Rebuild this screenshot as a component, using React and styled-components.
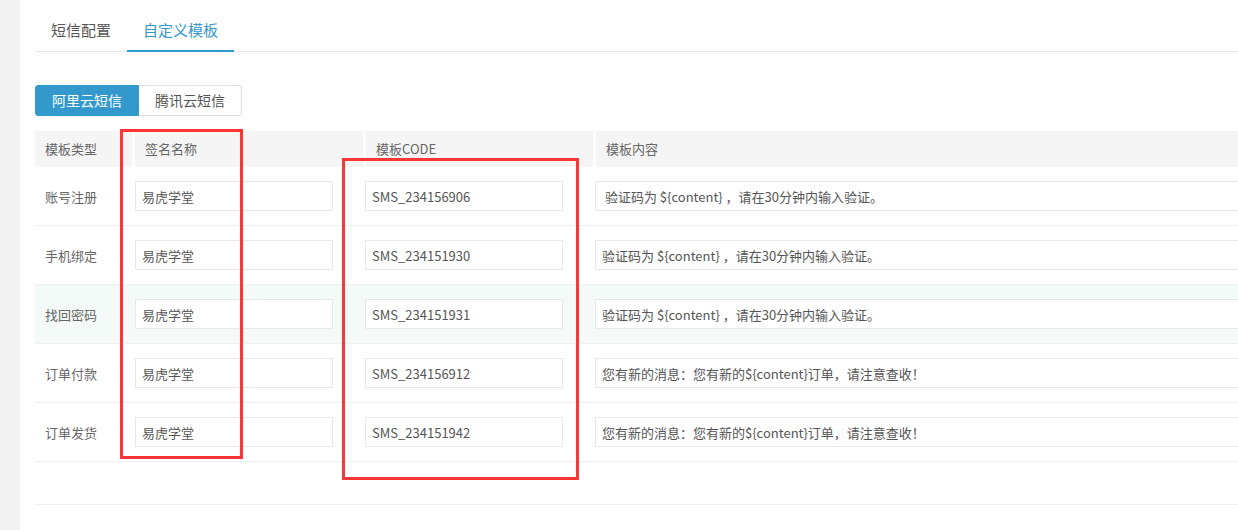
import React, { useState } from 'react';
import styled, { createGlobalStyle } from 'styled-components';

const GlobalStyle = createGlobalStyle`
    html, body {
        margin: 0;
        padding: 0;
        background: #fff;
        overflow: hidden;
    }
    body {
        font-family: "Noto Sans CJK SC", "Open Sans", sans-serif;
        color: #555;
    }
    * { box-sizing: border-box; }
`;

const Page = styled.div`
    position: relative;
    display: flex;
    width: 1238px;
    height: 530px;
    overflow: hidden;
`;

const SideStrip = styled.div`
    flex: 0 0 20px;
    background: #f3f3f3;
`;

const Main = styled.div`
    flex: 1;
    min-width: 0;
    padding-left: 15px;
    background: #fff;
`;

// TABS
const Tabs = styled.div`
    display: flex;
    padding-top: 9px;
    border-bottom: 1px solid #e8e8e8;
`;

const Tab = styled.div`
    height: 43px;
    line-height: 42px;
    padding: 0 16px;
    font-size: 15px;
    color: ${p => (p.active ? '#3399cc' : '#555')};
    border-bottom: 2px solid ${p => (p.active ? '#3399cc' : 'transparent')};
    margin-bottom: -1px;
    cursor: pointer;
`;

// PROVIDER SWITCH
const BtnGroup = styled.div`
    display: inline-flex;
    margin-top: 33px;
`;

const GroupBtn = styled.div`
    height: 31px;
    line-height: 29px;
    padding: 0 16px;
    font-size: 14px;
    border: 1px solid ${p => (p.active ? '#3399cc' : '#dcdfe6')};
    background: ${p => (p.active ? '#3399cc' : '#fff')};
    color: ${p => (p.active ? '#fff' : '#555')};
    cursor: pointer;
    &:first-child { border-radius: 3px 0 0 3px; }
    &:last-child { border-radius: 0 3px 3px 0; border-left: none; }
`;

// TABLE
const Table = styled.div`
    margin-top: 15px;
    font-size: 13px;
`;

const Row = styled.div`
    display: grid;
    grid-template-columns: 100px 231px 230px 1fr;
    background: ${p => (p.highlight ? '#f3faf7' : 'transparent')};
    border-bottom: 1px solid #efefef;
`;

const HeadRow = styled(Row)`
    border-bottom: none;
`;

const HeadCell = styled.div`
    height: 36px;
    line-height: 36px;
    padding-left: 10px;
    background: #f5f5f5;
    color: #666;
    border-right: 3px solid #fff;
    &:last-child { border-right: none; }
`;

const Cell = styled.div`
    padding: 14px 0;
    display: flex;
    align-items: center;
    ${p => p.label && 'padding-left: 10px; color: #666;'}
    ${p => p.shift && 'margin-left: -1px;'}
`;

const Field = styled.input`
    height: 30px;
    width: ${p => p.wide ? '720px' : '198px'};
    flex: none;
    border: 1px solid #e8e8e8;
    background: #fff;
    padding: 0 6px;
    font-family: "Noto Sans CJK SC", "Open Sans", sans-serif;
    font-size: 13px;
    color: #555;
    outline: none;
`;

const Footer = styled.div`
    height: 43px;
    border-bottom: 1px solid #efefef;
`;

// annotation boxes drawn over the table
const Mark = styled.div`
    position: absolute;
    border: 3px solid #fd3535;
    pointer-events: none;
`;

const rows = [
    { type: '账号注册', sign: '易虎学堂', code: 'SMS_234156906', content: ' 验证码为 ${content} ，请在30分钟内输入验证。' },
    { type: '手机绑定', sign: '易虎学堂', code: 'SMS_234151930', content: '验证码为 ${content} ，请在30分钟内输入验证。' },
    { type: '找回密码', sign: '易虎学堂', code: 'SMS_234151931', content: '验证码为 ${content} ，请在30分钟内输入验证。', highlight: true },
    { type: '订单付款', sign: '易虎学堂', code: 'SMS_234156912', content: '您有新的消息：您有新的${content}订单，请注意查收！' },
    { type: '订单发货', sign: '易虎学堂', code: 'SMS_234151942', content: '您有新的消息：您有新的${content}订单，请注意查收！' },
];

const App = () => {
    const [tab, setTab] = useState(1);
    const [provider, setProvider] = useState(0);

    return (
        <Page>
            <GlobalStyle />
            <SideStrip />
            <Main>
                <Tabs>
                    {['短信配置', '自定义模板'].map((t, i) =>
                        <Tab key={t} active={tab === i} onClick={() => setTab(i)}>{t}</Tab>
                    )}
                </Tabs>

                <BtnGroup>
                    {['阿里云短信', '腾讯云短信'].map((t, i) =>
                        <GroupBtn key={t} active={provider === i} onClick={() => setProvider(i)}>{t}</GroupBtn>
                    )}
                </BtnGroup>

                <Table>
                    <HeadRow>
                        <HeadCell>模板类型</HeadCell>
                        <HeadCell>签名名称</HeadCell>
                        <HeadCell>模板CODE</HeadCell>
                        <HeadCell>模板内容</HeadCell>
                    </HeadRow>
                    {rows.map(r =>
                        <Row key={r.type} highlight={r.highlight}>
                            <Cell label>{r.type}</Cell>
                            <Cell><Field defaultValue={r.sign} /></Cell>
                            <Cell shift><Field defaultValue={r.code} /></Cell>
                            <Cell shift><Field wide defaultValue={r.content} /></Cell>
                        </Row>
                    )}
                    <Footer />
                </Table>
            </Main>

            <Mark style={{ left: 120, top: 129, width: 123, height: 330 }} />
            <Mark style={{ left: 342, top: 158, width: 237, height: 322 }} />
        </Page>
    );
};

export default App;
